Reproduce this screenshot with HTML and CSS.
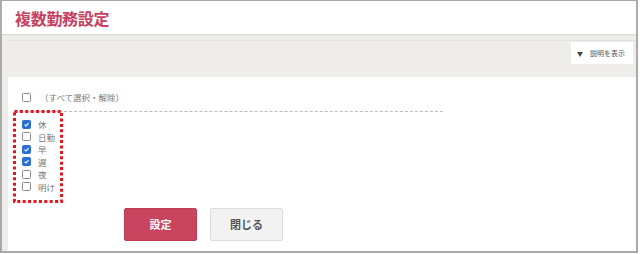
FILE: index.html
```html
<!DOCTYPE html>
<html lang="ja">
<head>
<meta charset="utf-8">
<link rel="stylesheet" href="styles.css">
</head>
<body>
<div class="frame">
  <header class="header"><h1 class="title">複数勤務設定</h1></header>
  <div class="toolbar">
    <div class="toolbar-inner">
      <button class="help"><span class="tri">▼</span>説明を表示</button>
    </div>
  </div>
  <main class="panel">
    <div class="row all"><span class="cb"></span><span class="lbl">（すべて選択・解除）</span></div>
    <div class="divider"></div>
    <ul class="list">
      <li class="row"><span class="cb on"><svg viewBox="0 0 9 9"><path d="M2 4.6 L3.8 6.4 L7.2 2.6" fill="none" stroke="#fff" stroke-width="1.4"/></svg></span><span class="lbl">休</span></li>
      <li class="row"><span class="cb"></span><span class="lbl">日勤</span></li>
      <li class="row"><span class="cb on"><svg viewBox="0 0 9 9"><path d="M2 4.6 L3.8 6.4 L7.2 2.6" fill="none" stroke="#fff" stroke-width="1.4"/></svg></span><span class="lbl">早</span></li>
      <li class="row"><span class="cb on"><svg viewBox="0 0 9 9"><path d="M2 4.6 L3.8 6.4 L7.2 2.6" fill="none" stroke="#fff" stroke-width="1.4"/></svg></span><span class="lbl">遅</span></li>
      <li class="row"><span class="cb"></span><span class="lbl">夜</span></li>
      <li class="row"><span class="cb"></span><span class="lbl">明け</span></li>
    </ul>
    <div class="actions">
      <button class="btn primary">設定</button>
      <button class="btn secondary">閉じる</button>
    </div>
    <svg class="highlight" width="50" height="93" viewBox="0 0 50 93">
      <rect x="1.5" y="1.5" width="47" height="90" fill="none" stroke="#e8141c" stroke-width="3" stroke-dasharray="3 2.4"/>
    </svg>
  </main>
</div>
</body>
</html>
```
FILE: styles.css
```css
* { box-sizing: border-box; }
html, body { margin: 0; padding: 0; background: #fff; }
body {
  width: 640px;
  height: 254px;
  font-family: "Noto Sans CJK JP", "Noto Sans", sans-serif;
}
.frame {
  width: 638px;
  height: 253px;
  border: 2px solid #a9a9a9;
  border-top-width: 1px;
  display: flex;
  flex-direction: column;
  background: #efede9;
}
.header {
  height: 33px;
  background: #fff;
  display: flex;
  align-items: center;
  padding-left: 13px;
  box-shadow: 0 1px 1px #d8d6d2;
  position: relative;
  z-index: 1;
}
.title {
  margin: 0;
  font-size: 16px;
  font-weight: bold;
  color: #c8405f;
  letter-spacing: -0.3px;
  line-height: 1;
}
.toolbar {
  height: 43px;
  padding: 6px 0 0 6px;
}
.toolbar-inner {
  border-top: 1px solid #e4e1dc;
  display: flex;
  justify-content: flex-end;
  padding: 1px 3px 0 0;
}
.help {
  width: 62px;
  height: 22px;
  border: 0;
  background: #fff;
  font-family: inherit;
  font-size: 7px;
  color: #555;
  display: flex;
  align-items: center;
  padding: 0 0 0 6px;
  cursor: pointer;
}
.tri { font-size: 6px; margin-right: 7px; color: #444; }
.panel {
  flex: 1;
  margin-left: 6px;
  background: #fff;
  position: relative;
  padding: 14px 0 0 14px;
}
.row {
  display: flex;
  align-items: center;
  height: 12.5px;
  font-size: 8.5px;
  color: #777;
}
.cb {
  width: 9px;
  height: 9px;
  border: 1px solid #8a8a8a;
  border-radius: 1.5px;
  background: #fff;
  margin-right: 7px;
  display: flex;
  flex-shrink: 0;
}
.cb.on {
  border-color: #2b6fd6;
  background: #2b6fd6;
}
.cb svg { width: 100%; height: 100%; }
.all .cb { margin-right: 9px; }
.divider {
  margin: 7.5px 0 0 -8px;
  width: 429px;
  border-top: 1px dashed #bdbdbd;
}
.list {
  list-style: none;
  margin: 6px 0 0;
  padding: 0;
}
.actions {
  display: flex;
  gap: 13px;
  margin: 14.5px 0 0 102px;
}
.btn {
  width: 73px;
  height: 33px;
  border-radius: 2px;
  font-family: inherit;
  font-size: 11px;
  font-weight: bold;
  cursor: pointer;
}
.primary {
  background: #c8445f;
  border: 1px solid #c03d58;
  color: #fff;
}
.secondary {
  background: #f2f2f2;
  border: 1px solid #dcdcdc;
  color: #555;
}
.highlight {
  position: absolute;
  left: 5px;
  top: 33px;
}
```
